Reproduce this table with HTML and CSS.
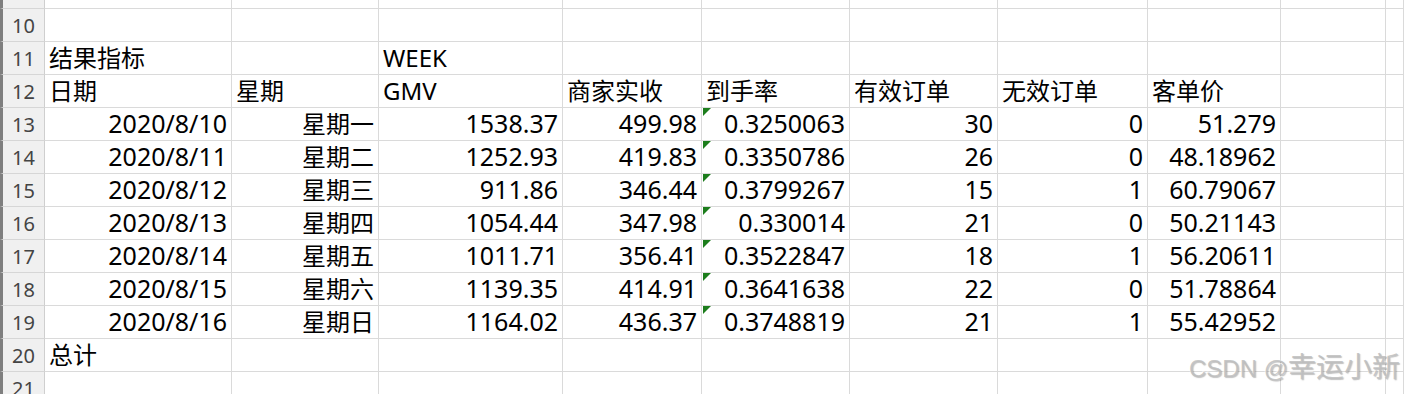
FILE: index.html
```html
<!DOCTYPE html>
<html lang="zh-CN">
<head>
<meta charset="utf-8">
<title>Sheet</title>
<link rel="stylesheet" href="styles.css">
</head>
<body>
<div class="sheet">
  <div class="hd">9</div><div class="c"></div><div class="c"></div><div class="c"></div><div class="c"></div><div class="c"></div><div class="c"></div><div class="c"></div><div class="c"></div><div class="c"></div><div class="c"></div>

  <div class="hd">10</div><div class="c"></div><div class="c"></div><div class="c"></div><div class="c"></div><div class="c"></div><div class="c"></div><div class="c"></div><div class="c"></div><div class="c"></div><div class="c"></div>

  <div class="hd">11</div><div class="c">结果指标</div><div class="c"></div><div class="c">WEEK</div><div class="c"></div><div class="c"></div><div class="c"></div><div class="c"></div><div class="c"></div><div class="c"></div><div class="c"></div>

  <div class="hd">12</div><div class="c">日期</div><div class="c">星期</div><div class="c">GMV</div><div class="c">商家实收</div><div class="c">到手率</div><div class="c">有效订单</div><div class="c">无效订单</div><div class="c">客单价</div><div class="c"></div><div class="c"></div>

  <div class="hd">13</div><div class="c r n">2020/8/10</div><div class="c r">星期一</div><div class="c r n">1538.37</div><div class="c r n">499.98</div><div class="c r n tri">0.3250063</div><div class="c r n">30</div><div class="c r n">0</div><div class="c r n">51.279</div><div class="c"></div><div class="c"></div>

  <div class="hd">14</div><div class="c r n">2020/8/11</div><div class="c r">星期二</div><div class="c r n">1252.93</div><div class="c r n">419.83</div><div class="c r n tri">0.3350786</div><div class="c r n">26</div><div class="c r n">0</div><div class="c r n">48.18962</div><div class="c"></div><div class="c"></div>

  <div class="hd">15</div><div class="c r n">2020/8/12</div><div class="c r">星期三</div><div class="c r n">911.86</div><div class="c r n">346.44</div><div class="c r n tri">0.3799267</div><div class="c r n">15</div><div class="c r n">1</div><div class="c r n">60.79067</div><div class="c"></div><div class="c"></div>

  <div class="hd">16</div><div class="c r n">2020/8/13</div><div class="c r">星期四</div><div class="c r n">1054.44</div><div class="c r n">347.98</div><div class="c r n tri">0.330014</div><div class="c r n">21</div><div class="c r n">0</div><div class="c r n">50.21143</div><div class="c"></div><div class="c"></div>

  <div class="hd">17</div><div class="c r n">2020/8/14</div><div class="c r">星期五</div><div class="c r n">1011.71</div><div class="c r n">356.41</div><div class="c r n tri">0.3522847</div><div class="c r n">18</div><div class="c r n">1</div><div class="c r n">56.20611</div><div class="c"></div><div class="c"></div>

  <div class="hd">18</div><div class="c r n">2020/8/15</div><div class="c r">星期六</div><div class="c r n">1139.35</div><div class="c r n">414.91</div><div class="c r n tri">0.3641638</div><div class="c r n">22</div><div class="c r n">0</div><div class="c r n">51.78864</div><div class="c"></div><div class="c"></div>

  <div class="hd">19</div><div class="c r n">2020/8/16</div><div class="c r">星期日</div><div class="c r n">1164.02</div><div class="c r n">436.37</div><div class="c r n tri">0.3748819</div><div class="c r n">21</div><div class="c r n">1</div><div class="c r n">55.42952</div><div class="c"></div><div class="c"></div>

  <div class="hd">20</div><div class="c">总计</div><div class="c"></div><div class="c"></div><div class="c"></div><div class="c"></div><div class="c"></div><div class="c"></div><div class="c"></div><div class="c"></div><div class="c"></div>

  <div class="hd">21</div><div class="c"></div><div class="c"></div><div class="c"></div><div class="c"></div><div class="c"></div><div class="c"></div><div class="c"></div><div class="c"></div><div class="c"></div><div class="c"></div>
</div>
<div class="watermark"><span class="wm-latin">CSDN @</span><span class="wm-cjk">幸运小新</span></div>
</body>
</html>
```

FILE: styles.css
```css
html, body {
  margin: 0;
  padding: 0;
  background: #ffffff;
  overflow: hidden;
  width: 1404px;
  height: 394px;
}

.sheet {
  display: grid;
  grid-template-columns: 45px 187px 147px 184px 139px 148px 148px 150px 133px 105px 1fr;
  grid-template-rows: 9px repeat(12, 33px);
  font-family: "Noto Sans", "Noto Sans CJK SC", sans-serif;
  font-size: 24px;
  color: #000000;
}

.c {
  box-sizing: border-box;
  border-right: 1px solid #dadada;
  border-bottom: 1px solid #dadada;
  display: flex;
  align-items: flex-end;
  justify-content: flex-start;
  padding: 0 4px 0 4px;
  line-height: 32px;
  white-space: nowrap;
  overflow: visible;
  position: relative;
}

.c.r {
  justify-content: flex-end;
}

.c.n {
  font-size: 25px;
  line-height: 31px;
  padding-bottom: 1px;
}

.tri::before {
  content: "";
  position: absolute;
  left: 1px;
  top: 0;
  width: 0;
  height: 0;
  border-top: 8px solid #1c7d1c;
  border-right: 8px solid transparent;
}

.hd {
  box-sizing: border-box;
  background: #f0f0f0;
  border-left: 3px solid #7f7f7f;
  border-right: 1px solid #cfcfcf;
  border-bottom: 1px solid #d6d6d6;
  color: #444444;
  font-size: 20px;
  line-height: 26px;
  display: flex;
  align-items: flex-end;
  justify-content: center;
  padding-bottom: 2px;
  overflow: hidden;
}

.watermark {
  position: absolute;
  left: 1189px;
  top: 347px;
  color: rgba(190, 190, 190, 0.85);
  text-shadow: 1px 1px 1px rgba(80, 80, 80, 0.35), -1px -1px 0 rgba(255, 255, 255, 0.6);
  white-space: nowrap;
  line-height: 36px;
}

.wm-latin {
  font-family: "Liberation Sans", Arial, sans-serif;
  font-size: 24px;
}

.wm-cjk {
  font-family: "Noto Sans CJK SC", sans-serif;
  font-size: 28px;
  letter-spacing: 0px;
}
```
